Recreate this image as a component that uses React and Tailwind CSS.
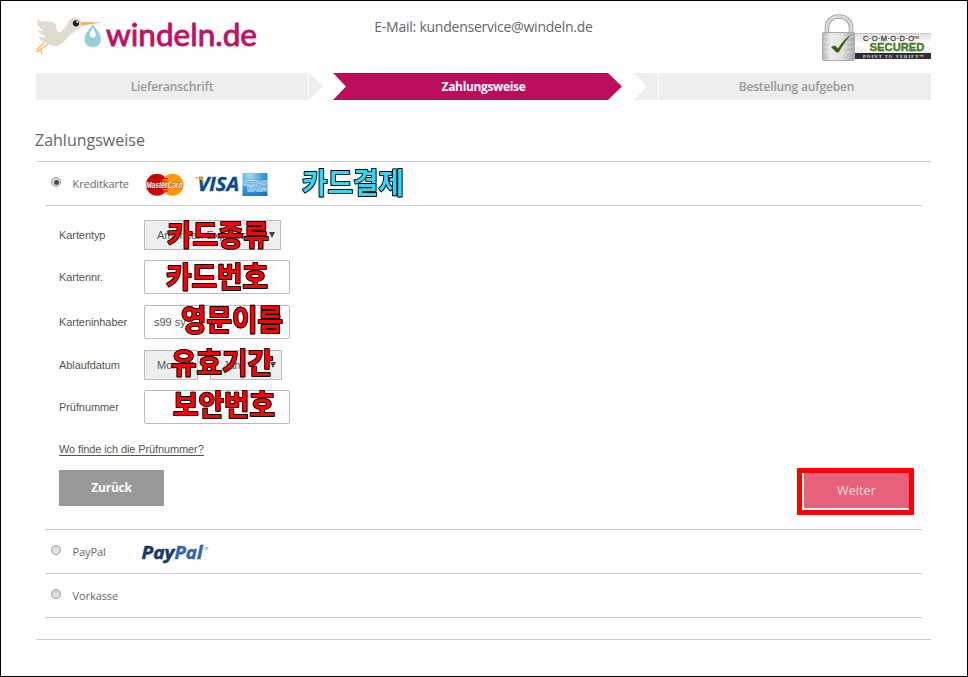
import React from 'react'

// handwritten-looking Korean hints that sit on top of the form
function Hint({ text, x, y, color = '#ff0000' }) {
  return (
    <svg
      className="absolute pointer-events-none overflow-visible [filter:drop-shadow(0.6px_0.6px_0.4px_#777777)]"
      style={{ left: x, top: y }}
      width="112"
      height="40"
      viewBox="0 0 112 40"
    >
      <text
        x="5"
        y="28"
        textLength="102"
        lengthAdjust="spacingAndGlyphs"
        fontFamily="'Noto Sans CJK KR', sans-serif"
        fontSize="29"
        fontWeight="700"
        stroke="#000000"
        strokeWidth="1.800"
        strokeLinejoin="round"
        paintOrder="stroke"
        fill={color}
      >
        {text}
      </text>
    </svg>
  )
}

function Logo() {
  return (
    <svg className="overflow-visible" width="222" height="42" viewBox="36 14 222 42">
      <path
        d="M37 19.500 C42 23 50 20.500 54 22.500 C57 25 56 30 58 32 C62 33 65 28 67.500 23 C70 17.500 76 16.500 79.500 19 C83 22 82.500 27 78.500 29.500 C72 32 69 36 64 41.500 C60 47 52 47 47.500 43.500 C42.500 42.500 40 40 39 36.500 C42 37.500 45 37.500 46 36.500 C41 35 38 32 37.500 29 C40 31 42 31 43 30 C39 28 37 25 37 19.500Z"
        fill="#dfdbcf"
      />
      <path d="M81.500 21.800 L102 22.500 L81.500 25.800Z" fill="#f9b04f" />
      <circle cx="76" cy="23.300" r="3.100" fill="#1b1b1b" />
      <circle cx="77.200" cy="22" r="0.900" fill="#ffffff" />
      <path d="M48 44 L39 50.500 L36.500 52.500 M41 50 L42 54 M44 43 L37 49.500 M40 51 L37 51" stroke="#f8b35c" strokeWidth="1.200" fill="none" />
      <path
        d="M92.600 24 C91 28.500 84.600 31.500 84.600 39 C84.600 44 88 47.200 92.800 47.200 C97.600 47.200 101 44 101 39 C101 31.500 94.500 28.500 92.600 24Z M92.800 27 C93.500 30 95.800 32 95.800 34.500 C95.800 36.500 94.500 37.600 92.800 37.600 C91.100 37.600 89.800 36.500 89.800 34.500 C89.800 32 92 30 92.800 27Z"
        fill="#95d0d8"
        fillRule="evenodd"
      />
      <text
        x="106"
        y="45.600"
        fontFamily="Lato, sans-serif"
        fontSize="30"
        fontWeight="400"
        textLength="151"
        lengthAdjust="spacingAndGlyphs"
        fill="#bf1260"
        stroke="#bf1260"
        strokeWidth="0.900"
        strokeLinejoin="round"
      >
        windeln.de
      </text>
    </svg>
  )
}

function ComodoSeal() {
  return (
    <svg className="overflow-visible" width="110" height="48" viewBox="822 13 110 48">
      <defs>
        <linearGradient id="lock" x1="0" x2="1">
          <stop offset="0" stopColor="#b4b4b4" />
          <stop offset="0.250" stopColor="#ebebeb" />
          <stop offset="0.600" stopColor="#e2e2e2" />
          <stop offset="1" stopColor="#a4a4a4" />
        </linearGradient>
        <linearGradient id="plate" x1="0" x2="0" y1="0" y2="1">
          <stop offset="0" stopColor="#e0e0e0" />
          <stop offset="0.500" stopColor="#ffffff" />
          <stop offset="1" stopColor="#ececec" />
        </linearGradient>
      </defs>
      <rect x="853" y="34" width="78" height="20" fill="url(#plate)" />
      <path d="M853 33.500H931" stroke="#c9c9c9" />
      <rect x="853" y="53" width="78" height="6" fill="#2f3037" />
      <path d="M827 34V28C827 12.500 851 12.500 851 28V34" fill="none" stroke="#9a9a9a" strokeWidth="4.500" />
      <path d="M827 34V28C827 12.500 851 12.500 851 28V34" fill="none" stroke="#dcdcdc" strokeWidth="2.800" />
      <rect x="822.500" y="32.500" width="32" height="28" rx="1" fill="url(#lock)" stroke="#aaaaaa" />
      <path d="M823 37H854M823 42H854M823 47H854M823 52H854" stroke="#ffffff" strokeOpacity="0.400" />
      <path d="M831 47 L835 45.500 L838 48.500 Q843 40 851 34.500 Q844 43 838.500 52.500 L836.500 52.500Z" fill="#356312" />
      <g fontFamily="'Liberation Sans', sans-serif" fontWeight="700">
        <text x="863" y="41.200" fontSize="7.500" fontWeight="400" textLength="51" fill="#44464a" stroke="#44464a" strokeWidth="0.300">C·O·M·O·D·O</text>
        <text x="913.500" y="38.500" fontSize="3.800" fill="#54565a">TM</text>
        <text x="869.500" y="50.800" fontSize="10.500" textLength="55" lengthAdjust="spacingAndGlyphs" fill="#447a1c" stroke="#447a1c" strokeWidth="0.300">SECURED</text>
        <text x="863" y="57.700" fontSize="4.500" fontFamily="'Liberation Serif', serif" textLength="61" fill="#e5e5e5">POINT TO VERIFY™</text>
      </g>
    </svg>
  )
}

function CardLogos() {
  return (
    <svg className="overflow-visible" width="124" height="26" viewBox="144 172 124 26">
      <circle cx="156" cy="184.700" r="11" fill="#cc0000" />
      <circle cx="171.500" cy="184.700" r="11" fill="#ff9900" />
      <path d="M162 178.500H167M161.500 181H166.500M161.500 188.500H166.500M162 191H167" stroke="#cc0000" />
      <text x="145" y="188" fontFamily="'Liberation Sans', sans-serif" fontSize="8.500" fontWeight="700" fontStyle="italic" textLength="36.500" lengthAdjust="spacingAndGlyphs" fill="#ffffff" stroke="#6a1a00" strokeWidth="0.700" paintOrder="stroke">MasterCard</text>
      <text x="196.500" y="190.700" fontFamily="'Open Sans', sans-serif" fontSize="19" fontWeight="700" fontStyle="italic" textLength="41.500" lengthAdjust="spacingAndGlyphs" fill="#0b4a8f" stroke="#0b4a8f" strokeWidth="0.400">VISA</text>
      <path d="M193.500 177H199.500Q201.500 177 202 179L203 183Q200 178.500 193.500 177.500Z" fill="#f5a01c" />
      <defs>
        <radialGradient id="amex" cx="0.300" cy="0.100" r="1">
          <stop offset="0" stopColor="#a9dbf2" />
          <stop offset="0.500" stopColor="#3f9fd8" />
          <stop offset="1" stopColor="#1c76bd" />
        </radialGradient>
      </defs>
      <rect x="241.500" y="173" width="25" height="23" fill="url(#amex)" />
      <g fontFamily="'Liberation Sans', sans-serif" fontWeight="700" fontSize="5.500" fill="#4f9dd0" stroke="#e4f3fb" strokeWidth="0.900" paintOrder="stroke">
        <text x="242" y="185.200" textLength="24" lengthAdjust="spacingAndGlyphs">AMERICAN</text>
        <text x="246.500" y="191" textLength="19.500" lengthAdjust="spacingAndGlyphs">EXPRESS</text>
      </g>
    </svg>
  )
}

function Steps() {
  return (
    <div className="flex h-[27px] text-[12px] leading-[27px] font-semibold text-[#999999] text-center font-['Open_Sans',sans-serif]">
      <div className="w-[272px] bg-[#eeeeee] tracking-[-0.15px]">Lieferanschrift</div>
      <div className="ml-px w-[14px] bg-[#eeeeee] [clip-path:polygon(0_0,100%_50%,0_100%)]" />
      <div className="ml-[10px] w-[289px] bg-[#bb0d5c] pl-[12px] text-white font-bold tracking-[-0.35px] [clip-path:polygon(0_0,275px_0,100%_50%,275px_100%,0_100%,13px_50%)]">
        Zahlungsweise
      </div>
      <div className="ml-3 w-6 bg-[#eeeeee] [clip-path:polygon(0_0,100%_0,100%_100%,0_100%,13px_50%)]" />
      <div className="ml-px flex-1 bg-[#eeeeee] pl-[3px] tracking-[-0.15px]">Bestellung aufgeben</div>
    </div>
  )
}

function Radio({ checked }) {
  return (
    <span className="flex w-[10px] h-[10px] items-center justify-center rounded-full border border-[#999999] bg-gradient-to-b from-[#d4d4d4] to-[#e6e6e6]">
      {checked && <span className="w-[5px] h-[5px] rounded-full bg-[#4d4d4d]" />}
    </span>
  )
}

function Method({ label, checked, children }) {
  return (
    <div className="flex h-11 border-b border-[#cccccc] pl-[6px]">
      <div className="pt-[15px]"><Radio checked={checked} /></div>
      <span className="ml-[11.5px] w-[71.5px] pt-[14px] text-[11px] leading-4 tracking-[-0.08px] text-[#666666] font-['Open_Sans',sans-serif]">{label}</span>
      {children}
    </div>
  )
}

function Select({ label, className }) {
  return (
    <div className={`flex h-[30px] items-center justify-between border border-[#bbbbbb] bg-[#eeeeee] pl-3 pr-[5px] ${className}`}>
      <span>{label}</span>
      <span className="h-0 w-0 border-x-[3px] border-t-[6px] border-x-transparent border-t-[#444444]" />
    </div>
  )
}

function Input({ value }) {
  return <div className="h-[34px] w-[146px] rounded-[2px] border border-[#bbbbbb] bg-white pl-[9px] leading-[32px]">{value}</div>
}

function Row({ label, className, children }) {
  return (
    <div className={`flex items-center ${className}`}>
      <span className="w-[85px] tracking-[-0.08px]">{label}</span>
      {children}
    </div>
  )
}

export default function App() {
  return (
    <div className="relative h-[677px] w-[968px] overflow-hidden border border-black bg-white pl-[35px] pr-9 font-['Liberation_Sans',sans-serif]">
      <header className="flex h-[72px] items-start justify-between">
        <div className="w-[222px] pt-[13px]"><Logo /></div>
        <p className="mr-[113px] pt-4 text-[14px] leading-5 tracking-[-0.24px] text-[#666666] font-['Open_Sans',sans-serif]">E-Mail: kundenservice@windeln.de</p>
        <div className="-mr-px pt-3"><ComodoSeal /></div>
      </header>
      <Steps />

      <h1 className="-ml-px mt-[27px] h-[34px] text-[16px] leading-[26px] text-[#666666] font-['Open_Sans',sans-serif]">Zahlungsweise</h1>
      <main className="h-[479px] border-y border-[#cccccc] px-[9px]">
        <Method label="Kreditkarte" checked>
          <div className="ml-[0.5px] pt-[10px]"><CardLogos /></div>
        </Method>

        <div className="h-[324px] border-b border-[#cccccc] pl-[14px] pr-2 pt-[14px] text-[11px] text-[#555555]">
          <Row label="Kartentyp" className="h-[30px]"><Select label="American Express" className="w-[137px]" /></Row>
          <Row label="Kartennr." className="mt-[10px] h-[34px]"><Input /></Row>
          <Row label="Karteninhaber" className="mt-[11px] h-[34px]"><Input value="s99 sy" /></Row>
          <Row label="Ablaufdatum" className="mt-[11px] h-[30px]">
            <Select label="Monat" className="w-[54px]" />
            <Select label="Jahr" className="ml-3 w-[72px]" />
          </Row>
          <Row label="Prüfnummer" className="mt-[10px] h-[34px]"><Input /></Row>
          <p className="mt-[17px] h-4 leading-4"><span className="inline-block border-b border-[#555555] leading-[12px] tracking-[-0.11px]">Wo finde ich die Prüfnummer?</span></p>
          <div className="mt-[11px] flex h-[47px] items-start justify-between text-white font-['Open_Sans',sans-serif]">
            <button className="mt-[2px] h-9 w-[105px] bg-[#999999] text-[12px] font-bold tracking-[-0.2px]">Zurück</button>
            <div className="h-[47px] w-[117px] rounded-[1px] bg-[#ff0000] p-[5px]">
              <div className="h-full bg-white pl-[2px]">
                <button className="block h-[35px] w-[105px] bg-[#e7617b] text-[12.5px] leading-[33px] tracking-[0.1px] text-[#fbdce2]">Weiter</button>
              </div>
            </div>
          </div>
        </div>

        <Method label="PayPal">
          <svg className="mt-[11px] -ml-1 overflow-visible" width="68" height="26" viewBox="140 541 68 26">
            <g fontFamily="'Open Sans', sans-serif" fontSize="17.500" fontWeight="700" fontStyle="italic" strokeWidth="0.500">
              <text x="141.500" y="559" textLength="33" lengthAdjust="spacingAndGlyphs" fill="#1e3768" stroke="#1e3768">Pay</text>
              <text x="174.500" y="559" textLength="28" lengthAdjust="spacingAndGlyphs" fill="#3269a3" stroke="#3269a3">Pal</text>
              <text x="204" y="549.500" fontSize="3" fontWeight="400" fill="#3269a3">TM</text>
            </g>
          </svg>
        </Method>
        <Method label="Vorkasse" />
      </main>

      <Hint text="카드결제" x={296} y={165} color="#33d6fa" />
      <Hint text="카드종류" x={161} y={217} />
      <Hint text="카드번호" x={160} y={259} />
      <Hint text="영문이름" x={175} y={302} />
      <Hint text="유효기간" x={165} y={345} />
      <Hint text="보안번호" x={167} y={387} />
    </div>
  )
}
